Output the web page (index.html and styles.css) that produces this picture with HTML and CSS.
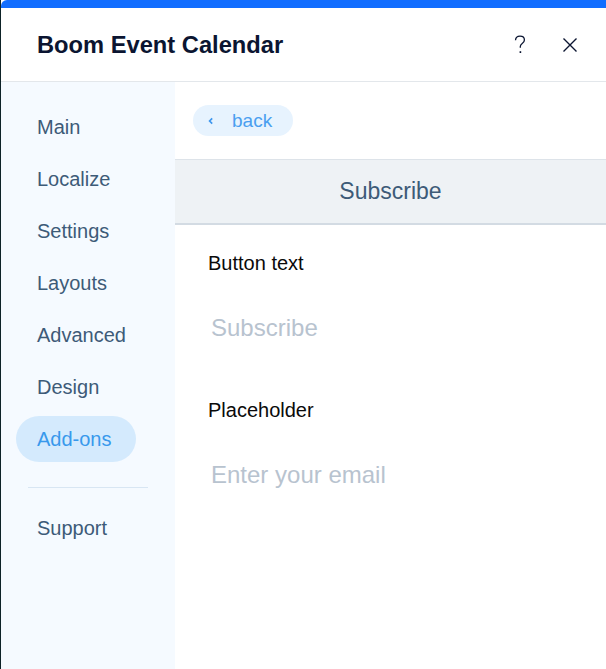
FILE: index.html
```html
<!DOCTYPE html>
<html>
<head>
<meta charset="utf-8">
<link rel="stylesheet" href="styles.css">
</head>
<body>
<div class="app">
  <div class="topbar"></div>
  <header class="header">
    <h1 class="title">Boom Event Calendar</h1>
    <div class="actions">
      <button class="icon-btn" aria-label="Help">
        <svg width="20" height="22" viewBox="0 0 20 22"><path d="M5.5 6.2C5.7 3.6 7.5 2.2 10 2.2c2.6 0 4.4 1.6 4.4 3.8 0 1.7-0.9 2.6-2.2 3.5-1.3 0.9-1.9 1.6-1.9 3.1v1.2" fill="none" stroke="#0b1531" stroke-width="1.3"/><rect x="9.6" y="17.2" width="1.6" height="1.8" fill="#0b1531"/></svg>
      </button>
      <button class="icon-btn" aria-label="Close">
        <svg width="18" height="18" viewBox="0 0 18 18"><path d="M2.5 2.5L15.5 15.5M15.5 2.5L2.5 15.5" stroke="#0b1531" stroke-width="1.4" fill="none"/></svg>
      </button>
    </div>
  </header>
  <div class="body">
    <nav class="sidebar">
      <div class="nav-item">Main</div>
      <div class="nav-item">Localize</div>
      <div class="nav-item">Settings</div>
      <div class="nav-item">Layouts</div>
      <div class="nav-item">Advanced</div>
      <div class="nav-item">Design</div>
      <div class="nav-item active"><span class="pill">Add-ons</span></div>
      <div class="divider"></div>
      <div class="nav-item support">Support</div>
    </nav>
    <main class="content">
      <div class="back-row">
        <button class="back">
          <svg width="8" height="10" viewBox="0 0 8 10"><path d="M5.2 2.3L2.6 5 5.2 7.7" fill="none" stroke="#3f97ee" stroke-width="1.7"/></svg>
          <span>back</span>
        </button>
      </div>
      <div class="section-bar">Subscribe</div>
      <div class="field">
        <div class="label">Button text</div>
        <div class="value">Subscribe</div>
      </div>
      <div class="field second">
        <div class="label">Placeholder</div>
        <div class="value">Enter your email</div>
      </div>
    </main>
  </div>
</div>
</body>
</html>
```

FILE: styles.css
```css
* { box-sizing: border-box; }
html, body {
  margin: 0;
  padding: 0;
  background: #ffffff;
  font-family: "Liberation Sans", Arial, sans-serif;
}
.app {
  width: 606px;
  height: 669px;
  display: flex;
  flex-direction: column;
  border-left: 1px solid #0d2227;
  background: #ffffff;
  overflow: hidden;
}
.topbar {
  height: 8px;
  background: #116dff;
  border-top-left-radius: 6px;
  flex: none;
}
.header {
  height: 74px;
  flex: none;
  display: flex;
  align-items: center;
  justify-content: space-between;
  padding: 0 23px 0 36px;
  border-bottom: 1px solid #e3e7eb;
}
.title {
  margin: 0;
  font-size: 23.7px;
  font-weight: 700;
  color: #0b1531;
  letter-spacing: 0;
  position: relative;
  top: 1px;
}
.actions {
  display: flex;
  align-items: center;
  gap: 24px;
}
.icon-btn {
  border: 0;
  background: none;
  padding: 0;
  width: 26px;
  height: 26px;
  display: flex;
  align-items: center;
  justify-content: center;
}
.body {
  flex: 1;
  display: flex;
  min-height: 0;
}
.sidebar {
  width: 174px;
  flex: none;
  background: #f5faff;
  padding-top: 19px;
  display: flex;
  flex-direction: column;
}
.nav-item {
  height: 52px;
  display: flex;
  align-items: center;
  padding-left: 36px;
  font-size: 20px;
  color: #3d5b78;
}
.nav-item.active {
  padding-left: 15px;
}
.pill {
  display: flex;
  align-items: center;
  width: 120px;
  height: 46px;
  padding-left: 21px;
  border-radius: 23px;
  background: #d4eafd;
  color: #3899ec;
}
.divider {
  height: 1px;
  background: #d8e6f3;
  margin: 22px 27px 0 27px;
}
.support {
  margin-top: 14px;
}
.content {
  flex: 1;
  display: flex;
  flex-direction: column;
}
.back-row {
  padding: 23px 0 0 18px;
  height: 77px;
}
.back {
  width: 100px;
  height: 31px;
  border: 0;
  border-radius: 15.5px;
  background: #e7f3fe;
  display: flex;
  align-items: center;
  padding: 0 0 0 14px;
  gap: 17px;
  font-family: inherit;
  font-size: 19px;
  color: #4a9ff0;
}
.back span { line-height: 30px; }
.section-bar {
  height: 66px;
  border-top: 1px solid #dde3e9;
  border-bottom: 2px solid #d3dbe3;
  background: #eef2f5;
  display: flex;
  align-items: center;
  justify-content: center;
  font-size: 23px;
  color: #3d5b78;
}
.field {
  padding-left: 33px;
  padding-top: 26px;
}
.field.second {
  padding-top: 55px;
}
.label {
  line-height: 24px;
  font-size: 20px;
  color: #0a0a0a;
}
.value {
  margin-top: 38px;
  padding-left: 3px;
  line-height: 30px;
  font-size: 24px;
  color: #b8c3cf;
}
```
